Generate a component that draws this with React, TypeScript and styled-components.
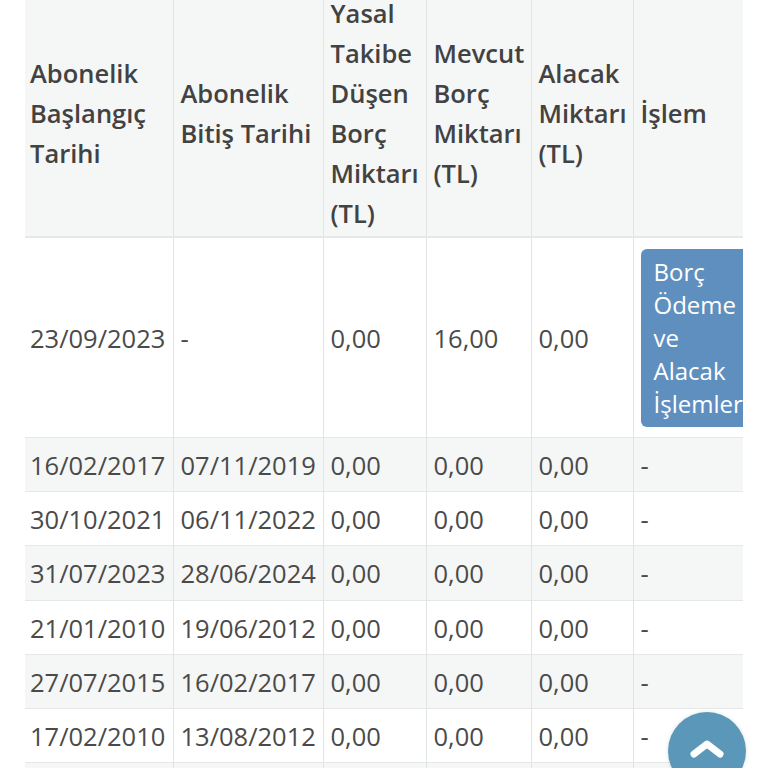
import React from "react";
import styled, { createGlobalStyle } from "styled-components";

const GlobalStyle = createGlobalStyle`
  html, body {
    margin: 0;
    padding: 0;
    background: #ffffff;
  }
  body {
    font-family: "Open Sans", "Noto Sans", "Liberation Sans", sans-serif;
    color: #4a4a4a;
    overflow: hidden;
  }
`;

const Page = styled.div`
  padding: 0 25px 0 25px;
`;

const TableScroller = styled.div`
  width: 718px;
  overflow: hidden;
  margin-top: -11px;
`;

const Table = styled.table`
  border-collapse: collapse;
  table-layout: fixed;
  width: 746px;
  font-size: 25.5px;
  line-height: 40px;
`;

const HeadCell = styled.th<{ $first?: boolean }>`
  padding: 4px 7px 3px ${(p) => (p.$first ? "5px" : "7px")};
  background: #f5f6f6;
  border-left: ${(p) => (p.$first ? "none" : "1px solid #e2e3e3")};
  border-bottom: 2px solid #e6e7e7;
  vertical-align: middle;
  text-align: left;
  font-weight: 600;
  color: #424242;
`;

const Row = styled.tr<{ $striped?: boolean }>`
  background: ${(p) => (p.$striped ? "#f5f6f6" : "#ffffff")};
`;

const Cell = styled.td<{ $first?: boolean }>`
  padding: 7px 7px 6.2px ${(p) => (p.$first ? "5px" : "7px")};
  border-top: 1px solid #e6e7e7;
  border-left: ${(p) => (p.$first ? "none" : "1px solid #e2e3e3")};
  vertical-align: middle;
  text-align: left;
  white-space: nowrap;
  overflow: hidden;
`;

const ActionCell = styled(Cell)`
  padding: 11px 7px 10px 7px;
  white-space: normal;
`;

const ActionButton = styled.button`
  display: block;
  width: 100%;
  box-sizing: border-box;
  border: none;
  border-radius: 6px;
  background: #5f8fbe;
  color: #ffffff;
  font-family: inherit;
  font-size: 24px;
  line-height: 33px;
  padding: 6px 13px 7px 13px;
  text-align: left;
  white-space: normal;
  cursor: pointer;
`;

const ScrollTop = styled.button`
  position: fixed;
  right: 22px;
  bottom: -22px;
  width: 78px;
  height: 78px;
  border-radius: 50%;
  border: none;
  background: #5b97b8;
  box-shadow: 0 0 4px rgba(0, 0, 0, 0.12);
  display: flex;
  align-items: center;
  justify-content: center;
  padding: 0;
  cursor: pointer;
`;

const Chevron = styled.svg`
  margin-top: -4px;
`;

const colWidths = [148, 150, 103, 105, 102, 138];

const headers = [
  "Abonelik Başlangıç Tarihi",
  "Abonelik Bitiş Tarihi",
  "Yasal Takibe Düşen Borç Miktarı (TL)",
  "Mevcut Borç Miktarı (TL)",
  "Alacak Miktarı (TL)",
  "İşlem",
];

type RowData = {
  start: string;
  end: string;
  legal: string;
  current: string;
  credit: string;
  action: boolean;
};

const rows: RowData[] = [
  { start: "23/09/2023", end: "-", legal: "0,00", current: "16,00", credit: "0,00", action: true },
  { start: "16/02/2017", end: "07/11/2019", legal: "0,00", current: "0,00", credit: "0,00", action: false },
  { start: "30/10/2021", end: "06/11/2022", legal: "0,00", current: "0,00", credit: "0,00", action: false },
  { start: "31/07/2023", end: "28/06/2024", legal: "0,00", current: "0,00", credit: "0,00", action: false },
  { start: "21/01/2010", end: "19/06/2012", legal: "0,00", current: "0,00", credit: "0,00", action: false },
  { start: "27/07/2015", end: "16/02/2017", legal: "0,00", current: "0,00", credit: "0,00", action: false },
  { start: "17/02/2010", end: "13/08/2012", legal: "0,00", current: "0,00", credit: "0,00", action: false },
  { start: "12/03/2008", end: "21/01/2010", legal: "0,00", current: "0,00", credit: "0,00", action: false },
];

export default function App() {
  return (
    <>
      <GlobalStyle />
      <Page>
        <TableScroller>
          <Table>
            <colgroup>
              {colWidths.map((w, i) => (
                <col key={i} style={{ width: w }} />
              ))}
            </colgroup>
            <thead>
              <tr>
                {headers.map((h, i) => (
                  <HeadCell key={h} $first={i === 0}>
                    {h}
                  </HeadCell>
                ))}
              </tr>
            </thead>
            <tbody>
              {rows.map((r, i) => (
                <Row key={i} $striped={i % 2 === 1}>
                  <Cell $first>{r.start}</Cell>
                  <Cell>{r.end}</Cell>
                  <Cell>{r.legal}</Cell>
                  <Cell>{r.current}</Cell>
                  <Cell>{r.credit}</Cell>
                  {r.action ? (
                    <ActionCell>
                      <ActionButton>Borç Ödeme ve Alacak İşlemleri</ActionButton>
                    </ActionCell>
                  ) : (
                    <Cell>-</Cell>
                  )}
                </Row>
              ))}
            </tbody>
          </Table>
        </TableScroller>
      </Page>
      <ScrollTop aria-label="Yukarı">
        <Chevron width="36" height="20" viewBox="0 0 36 20">
          <polyline
            points="5,15 18,5 31,15"
            fill="none"
            stroke="#ffffff"
            strokeWidth="7"
            strokeLinecap="round"
            strokeLinejoin="round"
          />
        </Chevron>
      </ScrollTop>
    </>
  );
}
